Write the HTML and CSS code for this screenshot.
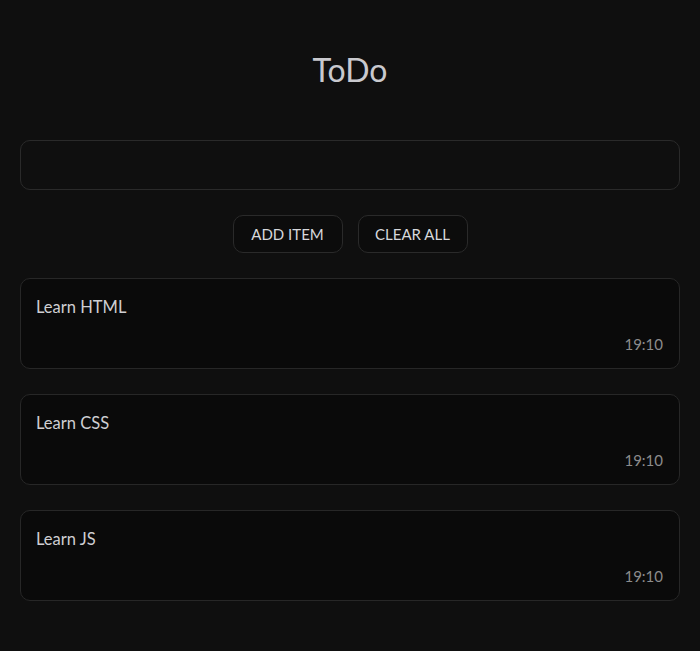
FILE: index.html
```html
<!DOCTYPE html>
<html lang="en">
<head>
<meta charset="utf-8">
<title>ToDo</title>
<link rel="stylesheet" href="styles.css">
</head>
<body>
<main class="app">
  <h1 class="title">ToDo</h1>
  <input class="entry" type="text" aria-label="New item">
  <div class="actions">
    <button class="btn">ADD ITEM</button>
    <button class="btn">CLEAR ALL</button>
  </div>
  <ul class="list">
    <li class="item"><span class="item-text">Learn HTML</span><span class="item-time">19:10</span></li>
    <li class="item"><span class="item-text">Learn CSS</span><span class="item-time">19:10</span></li>
    <li class="item"><span class="item-text">Learn JS</span><span class="item-time">19:10</span></li>
  </ul>
</main>
</body>
</html>
```
FILE: styles.css
```css
* { box-sizing: border-box; }
html, body { margin: 0; padding: 0; background: #0f0f0f; }
body { font-family: Lato, "Open Sans", sans-serif; color: #cfcfd3; }
.app {
  padding: 50px 20px 0;
  display: flex;
  flex-direction: column;
  gap: 25px;
}
.title {
  margin: 0 0 25px;
  font-size: 32px;
  line-height: 40px;
  font-weight: 400;
  text-align: center;
  color: #c9c9ce;
}
.entry {
  display: block;
  width: 100%;
  height: 50px;
  background: #0f0f0f;
  border: 1px solid #2a2a2a;
  border-radius: 10px;
  color: #cfcfd3;
  font: inherit;
  padding: 0 16px;
  outline: none;
}
.actions {
  display: flex;
  justify-content: center;
  gap: 15px;
}
.btn {
  width: 110px;
  height: 38px;
  background: #0c0c0c;
  border: 1px solid #2a2a2a;
  border-radius: 10px;
  color: #d6d8dc;
  font-family: Lato, "Open Sans", sans-serif;
  font-size: 15px;
  padding: 0;
}
.list {
  list-style: none;
  margin: 0;
  padding: 0;
  display: flex;
  flex-direction: column;
  gap: 25px;
}
.item {
  display: flex;
  flex-direction: column;
  background: #0a0a0a;
  border: 1px solid #272727;
  border-radius: 10px;
  padding: 16px 16px 12px 15px;
  font-size: 16.5px;
  line-height: 24px;
}
.item-time {
  margin-top: 13px;
  align-self: flex-end;
  color: #8c8c8c;
  font-size: 15px;
}
```
